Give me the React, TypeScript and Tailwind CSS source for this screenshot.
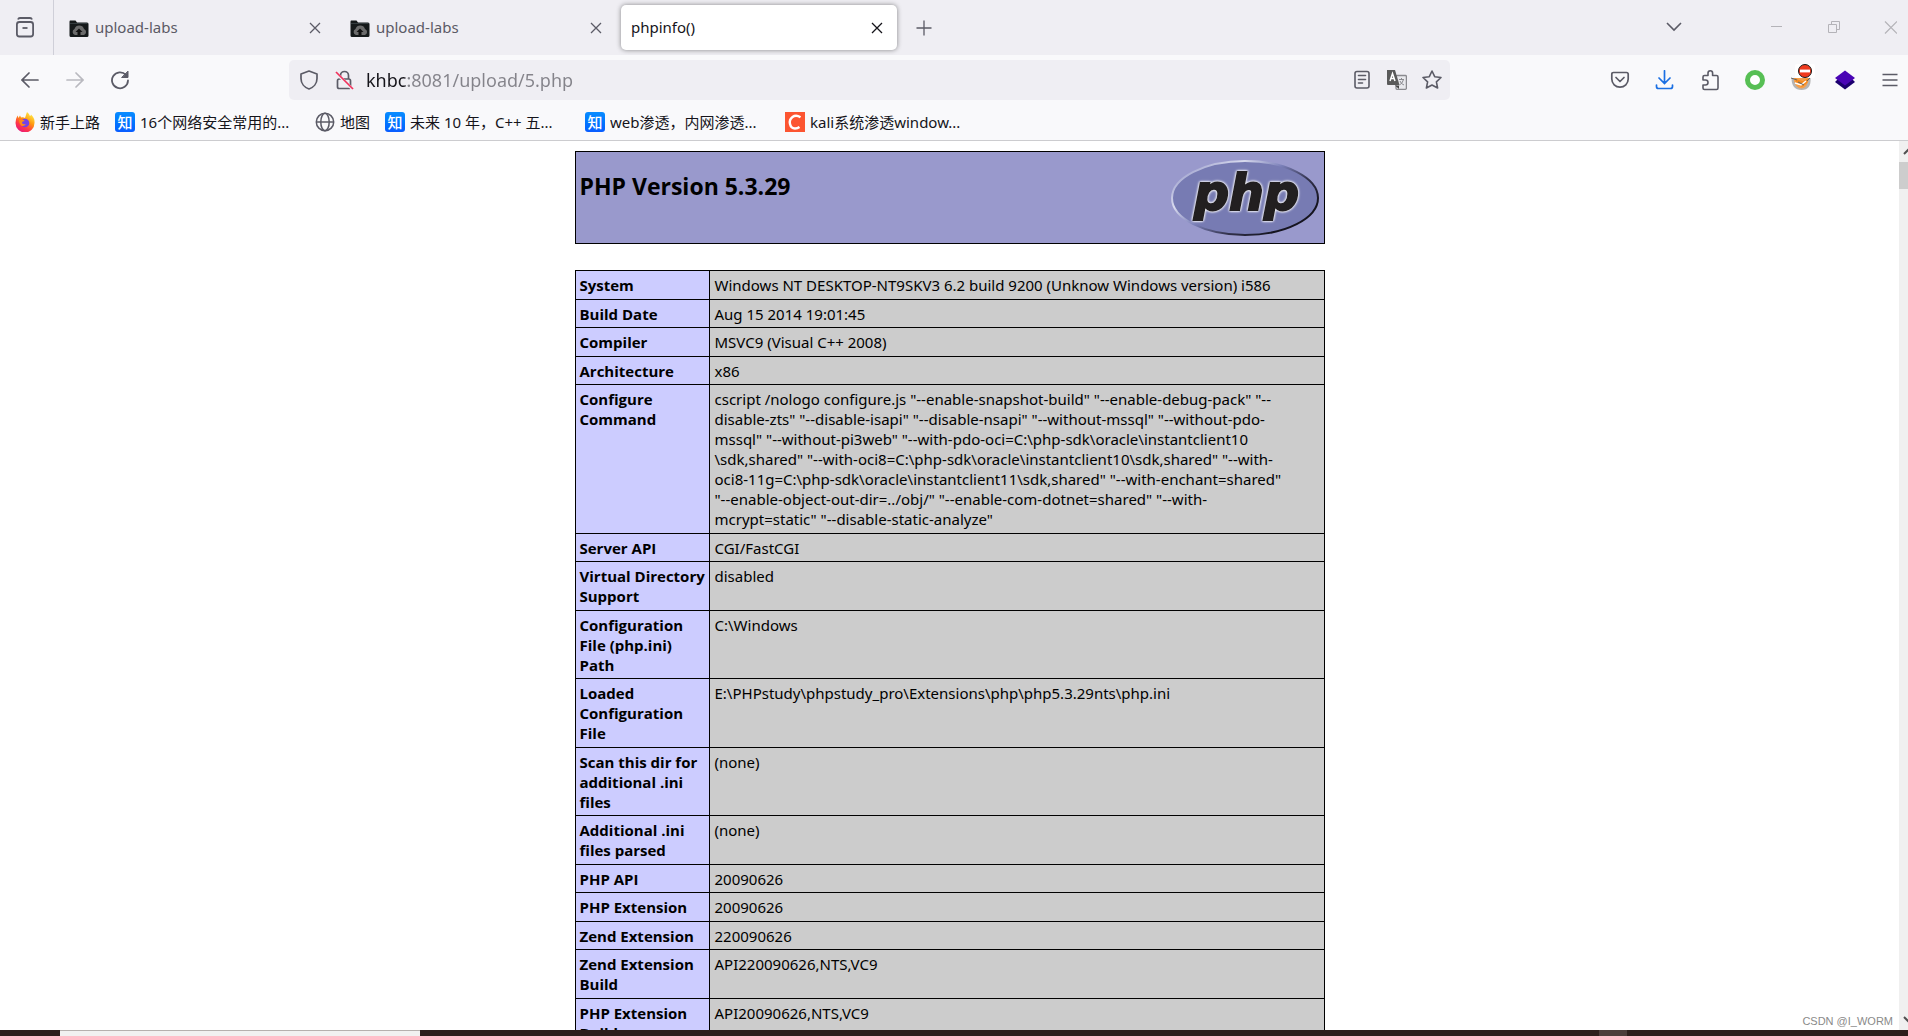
import type { ReactNode } from 'react';

interface TabProps {
  title: string;
  active?: boolean;
}

interface InfoRow {
  label: string;
  value: string;
}

const ROWS: InfoRow[] = [
  {
    label: 'System',
    value: 'Windows NT DESKTOP-NT9SKV3 6.2 build 9200 (Unknow Windows version) i586',
  },
  { label: 'Build Date', value: 'Aug 15 2014 19:01:45' },
  { label: 'Compiler', value: 'MSVC9 (Visual C++ 2008)' },
  { label: 'Architecture', value: 'x86' },
  {
    label: 'Configure\nCommand',
    value: [
      'cscript /nologo configure.js "--enable-snapshot-build" "--enable-debug-pack" "--',
      'disable-zts" "--disable-isapi" "--disable-nsapi" "--without-mssql" "--without-pdo-',
      'mssql" "--without-pi3web" "--with-pdo-oci=C:\\php-sdk\\oracle\\instantclient10',
      '\\sdk,shared" "--with-oci8=C:\\php-sdk\\oracle\\instantclient10\\sdk,shared" "--with-',
      'oci8-11g=C:\\php-sdk\\oracle\\instantclient11\\sdk,shared" "--with-enchant=shared"',
      '"--enable-object-out-dir=../obj/" "--enable-com-dotnet=shared" "--with-',
      'mcrypt=static" "--disable-static-analyze"',
    ].join('\n'),
  },
  { label: 'Server API', value: 'CGI/FastCGI' },
  { label: 'Virtual Directory\nSupport', value: 'disabled' },
  { label: 'Configuration\nFile (php.ini)\nPath', value: 'C:\\Windows' },
  {
    label: 'Loaded\nConfiguration\nFile',
    value: 'E:\\PHPstudy\\phpstudy_pro\\Extensions\\php\\php5.3.29nts\\php.ini',
  },
  { label: 'Scan this dir for\nadditional .ini\nfiles', value: '(none)' },
  { label: 'Additional .ini\nfiles parsed', value: '(none)' },
  { label: 'PHP API', value: '20090626' },
  { label: 'PHP Extension', value: '20090626' },
  { label: 'Zend Extension', value: '220090626' },
  { label: 'Zend Extension\nBuild', value: 'API220090626,NTS,VC9' },
  { label: 'PHP Extension\nBuild', value: 'API20090626,NTS,VC9' },
];

function IconButton({ label, children }: { label: string; children: ReactNode }) {
  return (
    <button
      type="button"
      aria-label={label}
      className="flex size-9 shrink-0 items-center justify-center text-[#5b5b66]"
    >
      {children}
    </button>
  );
}

function UploadLabsIcon() {
  return (
    <svg className="size-5" viewBox="0 0 20 20" aria-hidden>
      <path d="M1 2.500h5.500l1.500 2h10q1.500 0 1.500 1.500v11.500q0 1.500-1.500 1.500h-16Q.5 19 .5 17.500V4q0-1.500.5-1.500z" fill="#15191a" />
      <path d="M1 5.500h17.500" stroke="#343c3f" fill="none" />
      <path d="M6 17a3.200 3.200 0 0 1-.5-6 5 5 0 0 1 9.500 0 3.200 3.200 0 0 1 0 6z" fill="#6b6b6b" />
      <path d="m10 10.500 3.500 3.500h-2v3h-3v-3h-2z" fill="#111" />
    </svg>
  );
}

function Tab({ title, active = false }: TabProps) {
  return (
    <div
      className={
        active
          ? 'flex h-[45px] w-[276px] items-center rounded-[5px] bg-white pl-2.5 text-[#15141a] shadow-[0_0_5px_rgba(0,0,0,0.45)]'
          : 'flex h-[45px] w-[276px] items-center pl-2.5 text-[#5b5b66]'
      }
    >
      {!active && (
        <span className="mr-1.5">
          <UploadLabsIcon />
        </span>
      )}
      <span className="flex-1 pb-0.5 text-[15px] leading-5">{title}</span>
      <button
        type="button"
        aria-label={`Close ${title}`}
        className="mr-2 flex size-6 items-center justify-center"
      >
        <svg className="size-3" viewBox="0 0 12 12" fill="none" stroke="currentColor" strokeWidth="1.3" aria-hidden>
          <path d="m1 1 10 10M11 1 1 11" />
        </svg>
      </button>
    </div>
  );
}

function TabStrip() {
  return (
    <div className="flex h-[55px] shrink-0 items-center bg-[#efeef3]">
      <div className="flex h-full w-[54px] items-center border-r border-[#cfcfd8] pl-[7px]">
        <IconButton label="Firefox View">
          <svg className="size-6" viewBox="0 0 24 24" fill="none" stroke="currentColor" strokeWidth="1.8" aria-hidden>
            <path d="M5 3.500q.5-1.500 2-1.500h10q1.500 0 2 1.500" />
            <rect x="3.900" y="6" width="16.200" height="14.500" rx="2.500" />
            <path d="M9.500 12h5" />
          </svg>
        </IconButton>
      </div>
      <div className="flex gap-[5px] pl-[5px]">
        <Tab title="upload-labs" />
        <Tab title="upload-labs" />
        <Tab title="phpinfo()" active />
      </div>
      <div className="flex flex-1 items-center pl-[9px]">
        <IconButton label="New tab">
          <svg className="size-4" viewBox="0 0 16 16" stroke="currentColor" strokeWidth="1.300" aria-hidden>
            <path d="M8 .5v15M.5 8h15" />
          </svg>
        </IconButton>
      </div>
      <div className="mr-[66px]">
        <IconButton label="List all tabs">
          <svg className="size-4" viewBox="0 0 16 16" fill="none" stroke="currentColor" strokeWidth="1.600" aria-hidden>
            <path d="m1 3 7 7 7-7" />
          </svg>
        </IconButton>
      </div>
      <div className="flex gap-[21px] text-[#b4b3b8]">
        <button type="button" aria-label="Minimize" className="flex size-9 items-center justify-center">
          <svg className="size-3" viewBox="0 0 12 12" stroke="currentColor" aria-hidden>
            <path d="M1 4.500h11" />
          </svg>
        </button>
        <button type="button" aria-label="Restore" className="flex size-9 items-center justify-center">
          <svg className="size-[13px]" viewBox="0 0 13 13" fill="none" stroke="currentColor" aria-hidden>
            <path d="M1.500 3.500h8v8h-8zM4.500 3.500v-3h8v8h-3" />
          </svg>
        </button>
        <button type="button" aria-label="Close window" className="flex size-9 items-center justify-center">
          <svg className="size-3.5" viewBox="0 0 14 14" stroke="currentColor" strokeWidth="1.200" aria-hidden>
            <path d="m2 .5 12 12M14 .5l-12 12" />
          </svg>
        </button>
      </div>
    </div>
  );
}

function AddressBar() {
  return (
    <div className="flex h-10 flex-1 items-center rounded-[5px] bg-[#efeef3] pr-px pl-0.5">
      <IconButton label="Tracking protection">
        <svg className="size-5" viewBox="0 0 20 20" fill="none" stroke="currentColor" strokeWidth="1.700" strokeLinejoin="round" aria-hidden>
          <path d="M10 1 18 4v4.500C18 13.500 14.500 17.500 10 19 5.500 17.500 2 13.500 2 8.500V4z" />
        </svg>
      </IconButton>
      <IconButton label="Connection not secure">
        <svg className="size-5" viewBox="0 0 20 20" fill="none" stroke="currentColor" strokeWidth="1.700" aria-hidden>
          <path d="M5.500 9V5.500a4 4 0 0 1 8 0V9" />
          <rect x="2.500" y="9" width="13" height="9.500" rx="1.800" />
          <path d="m1 3 17 16.500" stroke="#efeef3" strokeWidth="3" />
          <path d="m1 2 17 17" stroke="#f0325c" />
        </svg>
      </IconButton>
      {/* host is dark, port and path are dimmed */}
      <input
        type="text"
        aria-label="Address"
        defaultValue="khbc:8081/upload/5.php"
        className="ml-[3px] h-9 flex-1 bg-[linear-gradient(to_right,#15141a_42px,#84838a_42px)] bg-clip-text text-[18px] text-[#84838a] outline-none [-webkit-text-fill-color:transparent]"
      />
      <div className="flex gap-px">
        <button type="button" aria-label="Reader view" className="flex h-9 w-[34px] items-center justify-center text-[#5b5b66]">
          <svg className="size-5" viewBox="0 0 20 20" fill="none" stroke="currentColor" strokeWidth="1.600" strokeLinecap="round" aria-hidden>
            <rect x="3" y="1.500" width="14" height="16.500" rx="2" />
            <path d="M6.500 5.500h7M6.500 9.500h7M6.500 13h4" />
          </svg>
        </button>
        <button type="button" aria-label="Translate page" className="flex h-9 w-[34px] items-center justify-center text-[#5b5b66]">
          <svg className="size-5" viewBox="0 0 20 20" aria-hidden>
            <rect x="9" y="5.500" width="10.400" height="13.800" rx="1" fill="#e9e9ed" stroke="#8a8a8f" strokeWidth="1.300" />
            <path d="M12 9.500h5M14.500 8v1.500M16.500 9.500q-1 4-4 5.500M13 11q1 3 4 4" stroke="#8a8a8f" fill="none" />
            <path d="M0 0h8l4.500 15H1q-1 0-1-1z" fill="#5a5a5a" />
            <path d="m3 11 2.500-7.500L8 11M4 8.500h3.200" stroke="#fff" strokeWidth="1.500" fill="none" />
            <path d="m8 15.500 4 3.500v-3.500z" fill="#444" />
          </svg>
        </button>
        <button type="button" aria-label="Bookmark this page" className="flex h-9 w-[34px] items-center justify-center text-[#5b5b66]">
          <svg className="size-5" viewBox="0 0 20 20" fill="none" stroke="currentColor" strokeWidth="1.600" strokeLinejoin="round" aria-hidden>
            <path d="m10 1 2.700 5.700 6.300.8-4.600 4.300 1.200 6.200L10 15l-5.600 3 1.200-6.200L1 7.500l6.300-.8z" />
          </svg>
        </button>
      </div>
    </div>
  );
}

function NavBar() {
  return (
    <div className="flex h-[50px] shrink-0 items-center bg-[#f9f9fb] pl-3">
      <div className="flex gap-[9px]">
        <IconButton label="Back">
          <svg className="size-[18px]" viewBox="0 0 18 18" fill="none" stroke="currentColor" strokeWidth="1.700" strokeLinecap="round" aria-hidden>
            <path d="M17 9H1M8 2 1 9l7 7" />
          </svg>
        </IconButton>
        <IconButton label="Forward">
          <svg className="size-[18px] opacity-40" viewBox="0 0 18 18" fill="none" stroke="currentColor" strokeWidth="1.700" strokeLinecap="round" aria-hidden>
            <path d="M1 9h16M10 2l7 7-7 7" />
          </svg>
        </IconButton>
        <IconButton label="Reload">
          <svg className="size-5" viewBox="0 0 20 20" fill="none" stroke="currentColor" strokeWidth="1.800" strokeLinecap="round" aria-hidden>
            <path d="M16 5a8 8 0 1 0 2 5.500" />
            <path d="M18 1.500v6h-6z" fill="currentColor" strokeWidth="1" strokeLinejoin="round" />
          </svg>
        </IconButton>
      </div>
      <div className="ml-[151px] mr-[152px] flex flex-1">
        <AddressBar />
      </div>
      <div className="flex gap-[9px]">
        <IconButton label="Pocket">
          <svg className="size-5" viewBox="0 0 20 20" fill="none" stroke="currentColor" strokeWidth="1.700" strokeLinecap="round" strokeLinejoin="round" aria-hidden>
            <path d="M3.500 2.500h13q1.700 0 1.700 1.700V9a8.200 8.200 0 0 1-16.400 0V4.200q0-1.700 1.700-1.700z" />
            <path d="m6 7.500 4 4 4-4" />
          </svg>
        </IconButton>
        <IconButton label="Downloads">
          <svg className="size-5" viewBox="0 0 20 20" fill="none" stroke="#1a6fe3" strokeWidth="1.700" strokeLinecap="round" aria-hidden>
            <path d="M9.500.8v12M4 8l5.500 5.500L15 8M1.500 15v1.500q0 2 2 2h12q2 0 2-2V15" />
          </svg>
        </IconButton>
        <IconButton label="Extensions">
          <svg className="size-[22px]" viewBox="0 0 22 22" fill="none" stroke="currentColor" strokeWidth="1.600" strokeLinejoin="round" aria-hidden>
            <path d="M4 11V8q0-1.500 1.500-1.500H9V4a2.300 2.300 0 0 1 4.600 0v2.500h3.900Q19 6.500 19 8v11q0 1.500-1.500 1.500h-12Q4 20.500 4 19v-3h2.500a2.500 2.500 0 0 0 0-5z" />
          </svg>
        </IconButton>
        <IconButton label="Green ring extension">
          <svg className="size-5" viewBox="0 0 20 20" aria-hidden>
            <circle cx="10" cy="10" r="7.500" fill="#fff" stroke="#57bf54" strokeWidth="5" />
          </svg>
        </IconButton>
        <IconButton label="FoxyProxy">
          <svg className="size-8" viewBox="0 0 32 32" aria-hidden>
            <path d="M7.500 14q0 12 10 12t9-12z" fill="#b5b5b5" />
            <path d="M9.500 14q1 10 8 10.500 6-.5 7.500-10.500z" fill="#f7a04a" />
            <path d="m11 14 4 2 4 1 6-3-2 5-5 4-6-3z" fill="#f58a1f" />
            <path d="m11 19 6 2 5-4" stroke="#fff" strokeWidth="1.500" fill="none" />
            <path d="m7 14 6 2M26 14l-3 3M14 18l6 3" stroke="#666" />
            <rect x="11" y="0" width="20" height="14" rx="2" fill="#fff" />
            <circle cx="21" cy="7" r="6.500" fill="#ef3a1e" stroke="#1a1a1a" />
            <path d="M16 7h10" stroke="#fff" strokeWidth="2.800" />
          </svg>
        </IconButton>
        <IconButton label="Purple layers extension">
          <svg className="size-5" viewBox="0 0 20 20" aria-hidden>
            <path d="m0 12 3-3h14l3 3-10 7.500z" fill="#1c006f" />
            <path d="m10 .5 10 7.500-10 7.500L0 8z" fill="#4a05b5" />
          </svg>
        </IconButton>
        <IconButton label="Menu">
          <svg className="size-4" viewBox="0 0 16 16" stroke="currentColor" strokeWidth="1.500" aria-hidden>
            <path d="M.5 2.500h15M.5 8h15M.5 13.500h15" />
          </svg>
        </IconButton>
      </div>
    </div>
  );
}

function ZhihuIcon() {
  return (
    <span className="flex size-5 items-center justify-center rounded-[3px] bg-linear-to-b from-[#0a8cff] to-[#0a5cff] text-[15px] leading-5 font-medium text-white">
      知
    </span>
  );
}

function FirefoxIcon() {
  return (
    <svg className="size-5" viewBox="0 0 20 20" aria-hidden>
      <defs>
        <linearGradient id="ff-body" x1="0.8" y1="0" x2="0.2" y2="1">
          <stop offset="0" stopColor="#fff44f" />
          <stop offset="0.4" stopColor="#ff980e" />
          <stop offset="0.7" stopColor="#ff3647" />
          <stop offset="1" stopColor="#e31587" />
        </linearGradient>
      </defs>
      <path
        d="M12 0q2 1.500 3 4 1-.5 1-1.500Q20 6 19.500 11a9.500 9.500 0 0 1-19 0Q.5 7 2.500 3.500L3.500 6 5 3.500l1 2q2.500-.5 4 .5Q11 3 12 0z"
        fill="url(#ff-body)"
      />
      <circle cx="10" cy="11" r="4.300" fill="#7542e5" />
      <path d="M4 8q4-1 6 1-3 0-3 2 1 2 4 1-2 3-5 1.500Q4 12 4 8z" fill="#ff8a16" />
    </svg>
  );
}

function GlobeIcon() {
  return (
    <svg className="size-5" viewBox="0 0 20 20" fill="none" stroke="#5b5b66" strokeWidth="1.500" aria-hidden>
      <circle cx="10" cy="10" r="8.700" />
      <ellipse cx="10" cy="10" rx="4.200" ry="8.700" />
      <path d="M1.300 10h17.400" />
    </svg>
  );
}

function CsdnIcon() {
  return (
    <svg className="size-5" viewBox="0 0 20 20" aria-hidden>
      <path d="M0 0h20v20H0z" fill="#fc5531" />
      <path d="M15.500 5.200Q11 2.500 7.500 5T5 12q1 4.500 5 4.500 2.500 0 4.500-1.500" fill="none" stroke="#fff" strokeWidth="2.400" />
    </svg>
  );
}

function Bookmark({ icon, title, long = false }: { icon: ReactNode; title: string; long?: boolean }) {
  return (
    <a href="#" className="flex items-center gap-[5px]">
      {icon}
      <span className={long ? 'w-40 overflow-hidden whitespace-nowrap' : 'whitespace-nowrap'}>{title}</span>
    </a>
  );
}

function BookmarksBar() {
  return (
    <nav
      aria-label="Bookmarks"
      className="flex h-9 shrink-0 items-center gap-[15px] border-b border-[#cccccf] bg-[#f9f9fb] pb-0.5 pl-[15px] text-[15px] leading-5 text-[#15141a]"
    >
      <Bookmark icon={<FirefoxIcon />} title="新手上路" />
      <Bookmark icon={<ZhihuIcon />} title="16个网络安全常用的..." long />
      <Bookmark icon={<GlobeIcon />} title="地图" />
      <Bookmark icon={<ZhihuIcon />} title="未来 10 年，C++ 五..." long />
      <Bookmark icon={<ZhihuIcon />} title="web渗透，内网渗透..." long />
      <Bookmark icon={<CsdnIcon />} title="kali系统渗透window..." long />
    </nav>
  );
}

function PhpLogo() {
  return (
    <svg className="h-[82px] w-[148px]" viewBox="0 0 148 82" role="img" aria-label="PHP logo">
      <defs>
        <linearGradient id="php-rim" x1="0.1" y1="0.1" x2="0.9" y2="0.7">
          <stop offset="0" stopColor="#a3a6d0" />
          <stop offset="0.25" stopColor="#d9dbee" />
          <stop offset="0.5" stopColor="#7a7fb8" />
          <stop offset="0.75" stopColor="#33334d" />
          <stop offset="1" stopColor="#15141f" />
        </linearGradient>
      </defs>
      <ellipse cx="74" cy="42" rx="73" ry="37" fill="#777bb3" stroke="url(#php-rim)" strokeWidth="2" />
      <text
        x="23"
        y="54"
        fontFamily="DejaVu Sans"
        fontSize="49"
        fontWeight="700"
        fontStyle="italic"
        fill="#221f20"
        stroke="#221f20"
        strokeWidth="2"
        className="[filter:drop-shadow(0_0_1px_#fff)_drop-shadow(0_0_1px_#fff)]"
      >
        php
      </text>
    </svg>
  );
}

function PhpInfoPage() {
  return (
    <main className="flex-1 overflow-hidden bg-white pt-2.5 text-black">
      <div className="mx-auto w-[750px]">
        <header className="flex h-[93px] justify-between border border-black bg-[#9999cc] pl-1">
          <h1 className="pt-[18px] font-['Open_Sans',sans-serif] text-[23px] leading-8 font-bold">
            PHP Version 5.3.29
          </h1>
          <a href="#" className="mr-[5px] pt-1">
            <PhpLogo />
          </a>
        </header>
        <table className="mt-[26px] w-full table-fixed border-collapse text-[15px] leading-5">
          <colgroup>
            <col className="w-[134px]" />
            <col />
          </colgroup>
          <tbody>
            {ROWS.map((row) => (
              <tr key={row.label} className="group align-top">
                <th
                  scope="row"
                  className="border border-black bg-[#ccccff] pt-1 pl-1 text-left align-top font-['Open_Sans',sans-serif] font-bold whitespace-pre group-odd:pb-1 group-even:pb-[3px]"
                >
                  {row.label}
                </th>
                <td className="border border-black bg-[#cccccc] pt-1 pl-[5px] align-top whitespace-pre group-odd:pb-1 group-even:pb-[3px]">
                  {row.value}
                </td>
              </tr>
            ))}
          </tbody>
        </table>
      </div>
    </main>
  );
}

function ScrollRail() {
  return (
    <div className="flex w-[9px] shrink-0 flex-col overflow-hidden bg-[#f0f0f0]">
      <svg className="h-[21px] w-[9px]" viewBox="0 0 9 21" fill="none" stroke="#505050" strokeWidth="2" aria-hidden>
        <path d="m5 13 5-5" />
      </svg>
      <div className="h-[27px] bg-[#cdcdcd]" />
      <div className="flex-1" />
      <svg className="h-[21px] w-[9px]" viewBox="0 0 9 21" fill="none" stroke="#505050" strokeWidth="2" aria-hidden>
        <path d="m5 8 5 5" />
      </svg>
    </div>
  );
}

export default function App() {
  return (
    <div className="relative flex h-screen flex-col overflow-hidden bg-white font-['Noto_Sans','Noto_Sans_CJK_SC',sans-serif]">
      <TabStrip />
      <NavBar />
      <BookmarksBar />
      <div className="flex min-h-0 flex-1">
        <PhpInfoPage />
        <ScrollRail />
      </div>
      <div className="flex h-1.5 shrink-0 bg-[#2e1f1c]">
        <div className="ml-[60px] w-[360px] border-t border-[#b5b0ae] bg-[#f1f1f1]" />
        <div className="flex-1" />
        <div className="mr-[281px] w-7 bg-[#4d3d3a]" />
      </div>
      <span className="absolute right-[15px] bottom-[7px] font-['Liberation_Sans',sans-serif] text-[11px] leading-4 text-[#8a8a8a]">
        CSDN @I_WORM
      </span>
    </div>
  );
}
